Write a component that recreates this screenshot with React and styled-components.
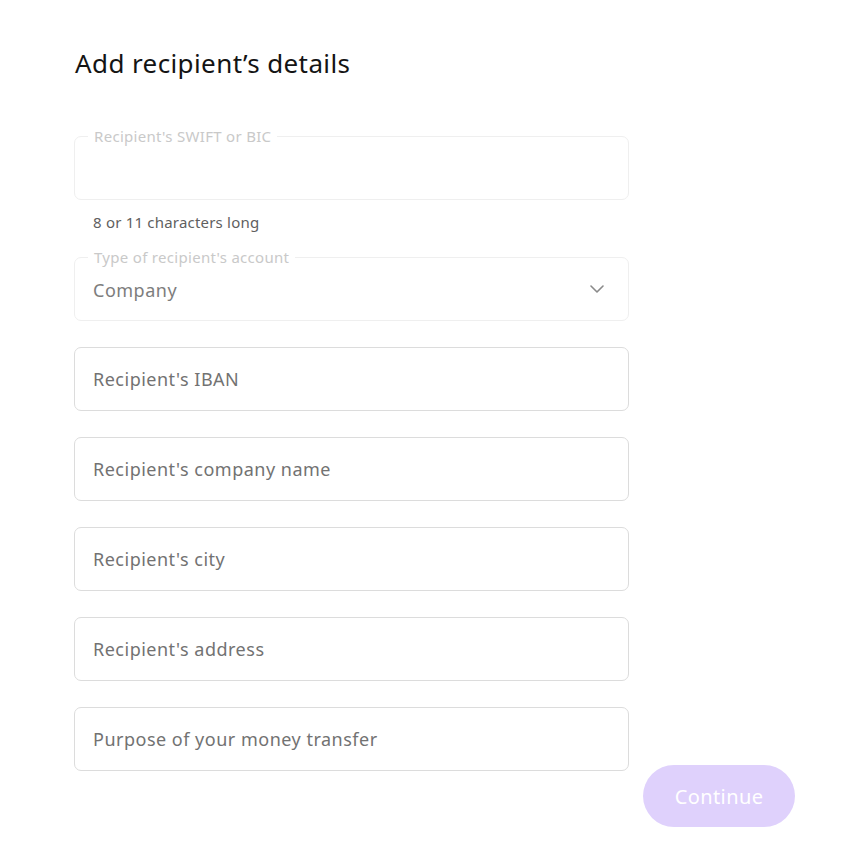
import React from 'react';
import styled, { createGlobalStyle } from 'styled-components';

const GlobalStyle = createGlobalStyle`
	body {
		margin: 0;
		background: #fff;
		font-family: "Noto Sans", Lato, sans-serif;
		color: #111;
	}
`;

const Page = styled.div`
	width: 721px;
	padding: 47px 0 20px 74px;
`;

const Title = styled.h1`
	margin: 0 0 57px 1px;
	font-size: 26px;
	line-height: 32px;
	font-weight: 400;
	letter-spacing: 0.4px;
	color: #141414;
`;

const Form = styled.form`
	width: 555px;
	display: flex;
	flex-direction: column;
	gap: 26px;
`;

const Group = styled.div`
	display: flex;
	flex-direction: column;
`;

const FieldBox = styled.label`
	position: relative;
	box-sizing: border-box;
	height: 64px;
	display: flex;
	align-items: center;
	padding: 0 18px;
	border: 1px solid ${p => (p.$muted ? '#efefef' : '#dcdcdc')};
	border-radius: 7px;
	background: #fff;
`;

const FloatLabel = styled.span`
	position: absolute;
	top: -10px;
	left: 13px;
	padding: 0 6px;
	background: #fff;
	font-size: 15px;
	line-height: 18px;
	letter-spacing: 0.3px;
	color: #c9c9c9;
`;

const Input = styled.input`
	flex: 1;
	border: 0;
	outline: none;
	padding: 0;
	background: transparent;
	font-family: inherit;
	font-size: 18px;
	letter-spacing: 0.5px;
	color: #222;

	&::placeholder {
		color: #727272;
	}
`;

const Value = styled.span`
	flex: 1;
	font-size: 18px;
	letter-spacing: 0.5px;
	color: #7d7d7d;
	padding-top: 2px;
`;

const Chevron = styled.svg`
	width: 14px;
	height: 8px;
	margin-right: 6px;
`;

const Hint = styled.p`
	margin: 0;
	padding: 13px 0 0 19px;
	font-size: 15px;
	line-height: 18px;
	letter-spacing: 0.2px;
	color: #5f5f5f;
`;

const Actions = styled.div`
	display: flex;
	justify-content: flex-end;
	margin-top: -6px;
`;

const Button = styled.button`
	width: 152px;
	height: 62px;
	border: 0;
	border-radius: 31px;
	background: #dfd1fc;
	color: #fff;
	font-family: inherit;
	font-size: 20px;
	letter-spacing: 0.4px;
	cursor: not-allowed;
`;

const fields = [
	"Recipient's IBAN",
	"Recipient's company name",
	"Recipient's city",
	"Recipient's address",
	'Purpose of your money transfer',
];

export default function App() {
	return (
		<Page>
			<GlobalStyle />
			<Title>Add recipient’s details</Title>

			<Form onSubmit={e => e.preventDefault()}>
				<Group>
					<FieldBox $muted>
						<FloatLabel>Recipient's SWIFT or BIC</FloatLabel>
						<Input type="text" disabled />
					</FieldBox>
					<Hint>8 or 11 characters long</Hint>
				</Group>

				<FieldBox $muted>
					<FloatLabel>Type of recipient's account</FloatLabel>
					<Value>Company</Value>
					<Chevron viewBox="0 0 14 8" fill="none">
						<polyline points="1,1 7,7 13,1" stroke="#8a8a8a" strokeWidth="1.6" strokeLinecap="round" strokeLinejoin="round" />
					</Chevron>
				</FieldBox>

				{fields.map(f => (
					<FieldBox key={f}>
						<Input type="text" placeholder={f} />
					</FieldBox>
				))}
			</Form>

			<Actions>
				<Button type="submit" disabled>Continue</Button>
			</Actions>
		</Page>
	);
}
